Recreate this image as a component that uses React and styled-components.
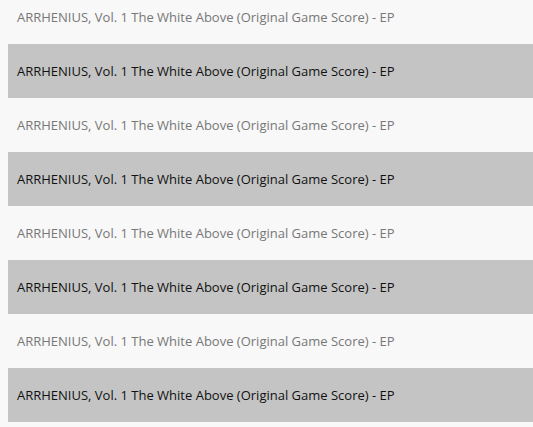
import * as React from "react";
import styled, { createGlobalStyle } from "styled-components";

const GlobalStyle = createGlobalStyle`
  html, body {
    margin: 0;
    padding: 0;
    background: #f8f8f8;
    overflow: hidden;
  }
  body {
    font-family: "Open Sans", "Liberation Sans", sans-serif;
  }
`;

const TrackList = styled.ul`
  list-style: none;
  margin: -10px 0 0 8px;
  padding: 0;
`;

const TrackRow = styled.li`
  display: flex;
  align-items: center;
  height: 54px;
  padding: 0 9px;
  font-size: 13px;
  white-space: nowrap;
  background: ${({ $active }) => ($active ? "#c4c4c4" : "transparent")};
  color: ${({ $active }) => ($active ? "#111111" : "#777777")};
`;

const title = "ARRHENIUS, Vol. 1 The White Above (Original Game Score) - EP";

const App = () => (
  <>
    <GlobalStyle />
    <TrackList>
      {Array.from({ length: 8 }, (_, i) => (
        <TrackRow key={i} $active={i % 2 === 1}>
          {title}
        </TrackRow>
      ))}
    </TrackList>
  </>
);

export default App;
